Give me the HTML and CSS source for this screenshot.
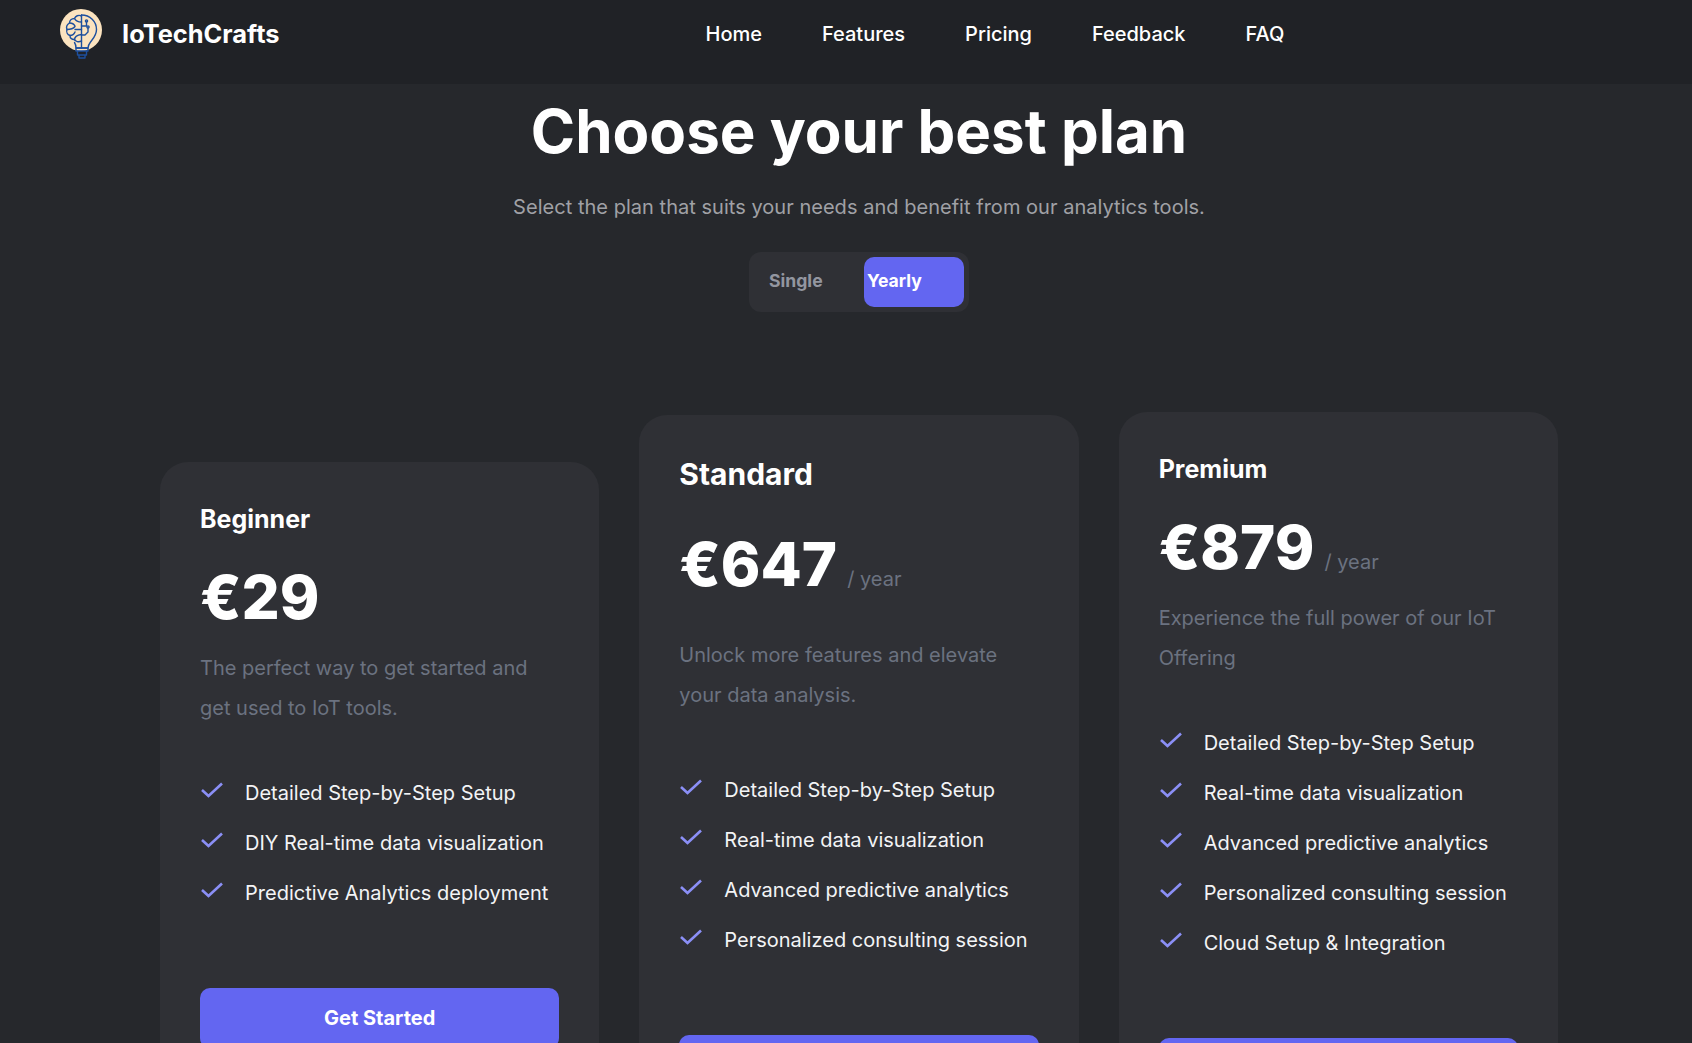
FILE: index.html
```html
<!DOCTYPE html>
<html lang="en">
<head>
<meta charset="utf-8">
<title>IoTechCrafts</title>
<link rel="stylesheet" href="styles.css">
</head>
<body>
<header class="nav">
  <a class="brand" href="#">
    <svg class="logo" viewBox="0 0 42 50" aria-hidden="true">
      <circle cx="21" cy="21" r="21" fill="#fbe3bf"/>
      <g fill="none" stroke="#1d4f9e" stroke-width="1.4" stroke-linecap="round" stroke-linejoin="round">
        <path d="M21.500 6c8.500 0 15 6.500 15 14.500 0 6-3.500 9-6 12.500-1.500 2-2.500 3.500-2.500 6H16c0-2.500-.5-4-1.500-5.500"/>
        <path d="M21.500 6v33"/>
        <path d="M21.500 7c-3-1.500-6 0-7 2.500-3 0-5 2-5 4.500-2.500 1.500-3.500 4-2.500 6.500-1 2.500.5 5 3 6 0 2.500 2 4 4.500 4 1 2 4 3 7 1.500"/>
        <path d="M9.500 14c2.500 0 4.500 1 5.500 3M7 20.500c3 0 6-.5 8-3M10 26.500c2.500 0 4-1 5-3.500M14.500 9.500c1 2 3 3.500 7 3.500M14.500 31c0-3 2.500-5 7-5.500M15 20.500h6.500"/>
        <path d="M21.500 17h5v-4M21.500 26h3.500l3-3v-4"/>
        <circle cx="26.500" cy="12" r="1.100"/><circle cx="28" cy="18" r="1.100"/>
        <path d="M16 39h12v3H16zM17.500 42v4h9v-4M19 46v3h6v-3"/>
      </g>
    </svg>
    <span class="brand-name">IoTechCrafts</span>
  </a>
  <nav class="links">
    <a href="#">Home</a>
    <a href="#">Features</a>
    <a href="#">Pricing</a>
    <a href="#">Feedback</a>
    <a href="#">FAQ</a>
  </nav>
</header>

<main class="main">
  <h1 class="title">Choose your best plan</h1>
  <p class="subtitle">Select the plan that suits your needs and benefit from our analytics tools.</p>
  <div class="toggle">
    <button class="toggle-btn single">Single</button>
    <button class="toggle-btn yearly">Yearly</button>
  </div>

  <section class="plans">
    <article class="card beginner">
      <h2 class="plan-name">Beginner</h2>
      <div class="price"><span class="amount">€29</span></div>
      <p class="desc">The perfect way to get started and get used to IoT tools.</p>
      <ul class="features">
        <li><svg class="check" viewBox="0 0 22 16"><path d="M1 8l6.500 6L21 1.500"/></svg>Detailed Step-by-Step Setup</li>
        <li><svg class="check" viewBox="0 0 22 16"><path d="M1 8l6.500 6L21 1.500"/></svg>DIY Real-time data visualization</li>
        <li><svg class="check" viewBox="0 0 22 16"><path d="M1 8l6.500 6L21 1.500"/></svg>Predictive Analytics deployment</li>
      </ul>
      <a class="cta" href="#">Get Started</a>
    </article>

    <article class="card standard">
      <h2 class="plan-name large">Standard</h2>
      <div class="price"><span class="amount">€647</span><span class="per">/ year</span></div>
      <p class="desc">Unlock more features and elevate your data analysis.</p>
      <ul class="features">
        <li><svg class="check" viewBox="0 0 22 16"><path d="M1 8l6.500 6L21 1.500"/></svg>Detailed Step-by-Step Setup</li>
        <li><svg class="check" viewBox="0 0 22 16"><path d="M1 8l6.500 6L21 1.500"/></svg>Real-time data visualization</li>
        <li><svg class="check" viewBox="0 0 22 16"><path d="M1 8l6.500 6L21 1.500"/></svg>Advanced predictive analytics</li>
        <li><svg class="check" viewBox="0 0 22 16"><path d="M1 8l6.500 6L21 1.500"/></svg>Personalized consulting session</li>
      </ul>
      <a class="cta" href="#">Get Started</a>
    </article>

    <article class="card premium">
      <h2 class="plan-name">Premium</h2>
      <div class="price"><span class="amount">€879</span><span class="per">/ year</span></div>
      <p class="desc">Experience the full power of our IoT Offering</p>
      <ul class="features">
        <li><svg class="check" viewBox="0 0 22 16"><path d="M1 8l6.500 6L21 1.500"/></svg>Detailed Step-by-Step Setup</li>
        <li><svg class="check" viewBox="0 0 22 16"><path d="M1 8l6.500 6L21 1.500"/></svg>Real-time data visualization</li>
        <li><svg class="check" viewBox="0 0 22 16"><path d="M1 8l6.500 6L21 1.500"/></svg>Advanced predictive analytics</li>
        <li><svg class="check" viewBox="0 0 22 16"><path d="M1 8l6.500 6L21 1.500"/></svg>Personalized consulting session</li>
        <li><svg class="check" viewBox="0 0 22 16"><path d="M1 8l6.500 6L21 1.500"/></svg>Cloud Setup &amp; Integration</li>
      </ul>
      <a class="cta" href="#">Get Started</a>
    </article>
  </section>
</main>
</body>
</html>
```

FILE: styles.css
```css
* { box-sizing: border-box; }

html, body {
  margin: 0;
  height: 1043px;
  overflow: hidden;
}

body {
  background: #26282c;
  color: #fff;
  font-family: Inter, "Liberation Sans", sans-serif;
}

a { color: inherit; text-decoration: none; }

.nav {
  display: flex;
  align-items: flex-start;
  height: 84px;
  padding: 9px 0 0 60px;
  background: #202226;
}

.brand {
  display: flex;
  align-items: flex-start;
  gap: 20px;
}

.logo {
  width: 42px;
  height: 50px;
  display: block;
}

.brand-name {
  font-size: 25.400px;
  font-weight: 700;
  line-height: 32px;
  margin-top: 9px;
}

.links {
  display: flex;
  gap: 60px;
  margin-left: 426px;
  margin-top: 11px;
  font-size: 20px;
  font-weight: 500;
  line-height: 28px;
}

.main {
  padding: 11px 134px 0 160px;
}

.title {
  margin: 0;
  text-align: center;
  font-size: 60px;
  line-height: 72px;
  font-weight: 700;
}

.subtitle {
  margin: 26px 0 0;
  text-align: center;
  font-size: 20px;
  line-height: 28px;
  letter-spacing: 0.030px;
  color: #a0a1a6;
}

.toggle {
  display: flex;
  width: 220px;
  height: 60px;
  margin: 31px auto 0;
  padding: 5px;
  border-radius: 12px;
  background: #2f3035;
}

.toggle-btn {
  border: 0;
  border-radius: 10px;
  background: transparent;
  font-family: inherit;
  font-size: 17.600px;
  font-weight: 700;
  text-align: left;
  padding-bottom: 3px;
}

.single {
  width: 110px;
  padding-left: 15px;
  padding-right: 0;
  padding-top: 0;
  color: #9396a0;
}

.yearly {
  width: 100px;
  padding-left: 3px;
  padding-right: 0;
  padding-top: 0;
  color: #fff;
  background: #6366f1;
}

.plans {
  display: flex;
  align-items: center;
  gap: 40px;
  margin-top: 100px;
}

.card {
  flex: 1 1 0;
  padding: 41px 40px 40px;
  border-radius: 28px;
  background: #2f3035;
}

.plan-name {
  margin: 0;
  font-size: 25px;
  line-height: 32px;
  font-weight: 700;
}

.plan-name.large {
  font-size: 30px;
  line-height: 36px;
}

.price {
  display: flex;
  align-items: baseline;
  margin-top: 32px;
}

.standard .price { margin-top: 42px; }

.amount {
  font-size: 60px;
  line-height: 60px;
  font-weight: 800;
}

.per {
  margin-left: 10px;
  font-size: 20px;
  color: #6b7280;
}

.desc {
  margin: 21px 0 0;
  font-size: 20px;
  line-height: 40px;
  color: #6b7280;
}

.standard .desc { margin-top: 41px; }

.features {
  list-style: none;
  margin: 51px 0 0;
  padding: 0;
  display: flex;
  flex-direction: column;
  gap: 22px;
}

.standard .features { margin-top: 61px; }

.features li {
  display: flex;
  align-items: center;
  gap: 22px;
  font-size: 20px;
  line-height: 28px;
  color: #f3f4f6;
}

.check {
  flex: none;
  width: 22px;
  height: 16px;
  margin-top: -7px;
  margin-left: 1px;
  fill: none;
  stroke: #8b8ff6;
  stroke-width: 2.600;
}

.cta {
  display: block;
  margin-top: 81px;
  padding: 16px 0;
  border-radius: 10px;
  background: #6366f1;
  text-align: center;
  font-size: 20px;
  line-height: 28px;
  font-weight: 700;
}
```
